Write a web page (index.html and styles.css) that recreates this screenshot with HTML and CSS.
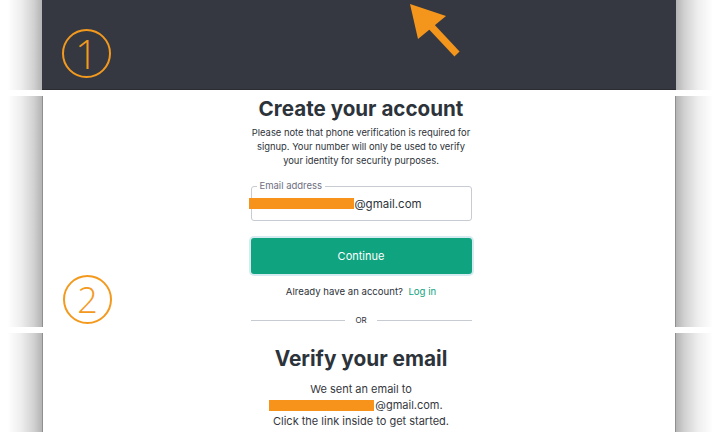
FILE: index.html
```html
<!DOCTYPE html>
<html lang="en">
<head>
<meta charset="utf-8">
<title>Create your account</title>
<link rel="stylesheet" href="styles.css">
</head>
<body>
<div class="page">
  <section class="shot shot-1">
    <div class="shade shade-l"></div>
    <div class="panel panel-dark">
      <div class="step step-1">1</div>
      <svg class="arrow" viewBox="400 0 70 65" width="70" height="65" aria-hidden="true">
        <polygon points="410,4 446,16 418,39" fill="#f5961c"/>
        <line x1="428" y1="23" x2="457" y2="54" stroke="#f5961c" stroke-width="7"/>
      </svg>
    </div>
    <div class="shade shade-r"></div>
  </section>

  <section class="shot shot-2">
    <div class="shade shade-l"></div>
    <div class="panel panel-light">
      <div class="step step-2">2</div>
      <div class="form">
        <h1 class="title">Create your account</h1>
        <p class="note">Please note that phone verification is required for signup. Your number will only be used to verify your identity for security purposes.</p>
        <div class="field">
          <span class="field-label">Email address</span>
          <span class="redact redact-in"></span><span class="field-value">@gmail.com</span>
        </div>
        <div class="btn">Continue</div>
        <div class="login">Already have an account?&nbsp; <span class="link">Log in</span></div>
        <div class="or"><span class="or-line"></span><span class="or-text">OR</span><span class="or-line"></span></div>
      </div>
    </div>
    <div class="shade shade-r"></div>
  </section>

  <section class="shot shot-3">
    <div class="shade shade-l"></div>
    <div class="panel panel-light">
      <div class="form">
        <h2 class="title title-2">Verify your email</h2>
        <div class="sent">
          <div>We sent an email to</div>
          <div class="sent-mail"><span class="redact redact-out"></span><span>@gmail.com.</span></div>
          <div>Click the link inside to get started.</div>
        </div>
      </div>
    </div>
    <div class="shade shade-r"></div>
  </section>
</div>
</body>
</html>
```

FILE: styles.css
```css
* { box-sizing: border-box; }

html, body {
  margin: 0;
  padding: 0;
  background: #ffffff;
  width: 720px;
  height: 432px;
  overflow: hidden;
  font-family: Inter, "Noto Sans", sans-serif;
  color: #2d333a;
}

.page {
  display: flex;
  flex-direction: column;
  gap: 6px;
}

.shot {
  display: grid;
  grid-template-columns: 42px 634px 44px;
}

.shot-1 { height: 90px; }
.shot-2 { height: 231px; }
.shot-3 { height: 110px; }

.shade-l {
  background: linear-gradient(to right, #ffffff 0%, #ffffff 18%, #eeeeee 50%, #d2d2d2 80%, #b4b4b4 100%);
}

.shade-r {
  background: linear-gradient(to left, #ffffff 0%, #ffffff 16%, #eeeeee 50%, #d2d2d2 80%, #b4b4b4 100%);
}

.panel {
  position: relative;
}

.panel-dark {
  background: #363841;
  border-bottom: 1px solid #2b2c33;
}

.panel-light {
  background: #ffffff;
  border-left: 1px solid #8f8f8f;
  border-right: 1px solid #8f8f8f;
  padding-left: 4px;
}

.step {
  position: absolute;
  width: 49px;
  height: 49px;
  border: 2.5px solid #f39a1e;
  border-radius: 50%;
  display: flex;
  align-items: center;
  justify-content: center;
  color: #f39a1e;
  font-family: "Open Sans", "Liberation Sans", sans-serif;
  font-weight: 300;
  line-height: 1;
}

.step-1 {
  left: 20px;
  top: 29px;
  font-size: 40px;
}

.step-2 {
  left: 20px;
  top: 179px;
  font-size: 36px;
}

.arrow {
  position: absolute;
  left: 358px;
  top: 0;
}

.form {
  width: 221px;
  margin: 0 auto;
  display: flex;
  flex-direction: column;
  align-items: stretch;
  text-align: center;
}

.title {
  margin: 0 -10px;
  padding-top: 1px;
  font-size: 20.6px;
  line-height: 24px;
  font-weight: 700;
  color: #2d333a;
  white-space: nowrap;
}

.note {
  margin: 5px 0 0;
  font-size: 9.4px;
  line-height: 14px;
  color: #2d333a;
}

.field {
  position: relative;
  margin-top: 18px;
  height: 35px;
  border: 1px solid #c7ccd3;
  border-radius: 3px;
  display: flex;
  align-items: center;
  text-align: left;
}

.field-label {
  position: absolute;
  left: 5px;
  top: -7px;
  padding: 0 3px;
  background: #ffffff;
  font-size: 9.5px;
  line-height: 12px;
  color: #6e6e80;
}

.redact {
  display: inline-block;
  height: 11px;
  width: 105px;
  background: #f7931a;
}

.redact-in {
  margin-left: -3px;
}

.field-value {
  font-size: 11.5px;
  color: #2d333a;
  padding-left: 1px;
}

.btn {
  margin-top: 17px;
  height: 36px;
  background: #10a37f;
  border-radius: 3px;
  box-shadow: 0 0 0 2px #d6eaf1;
  color: #ffffff;
  font-size: 11px;
  display: flex;
  align-items: center;
  justify-content: center;
}

.login {
  margin-top: 11px;
  font-size: 9.6px;
  line-height: 14px;
  color: #2d333a;
}

.link {
  color: #10a37f;
}

.or {
  margin-top: 15px;
  height: 12px;
  display: flex;
  align-items: center;
  gap: 10px;
}

.or-line {
  flex: 1;
  height: 1px;
  background: #c7ccd3;
}

.or-text {
  font-size: 8px;
  color: #2d333a;
}

.shot-3 .form {
  padding-top: 13px;
}

.title-2 {
  font-size: 20.8px;
  line-height: 25px;
  padding-top: 0;
}

.sent {
  margin: 10px -20px 0;
  font-size: 11px;
  line-height: 16px;
  color: #353740;
}

.sent-mail {
  display: flex;
  align-items: center;
  justify-content: center;
  padding-right: 10px;
}

.redact-out {
  margin-right: 1px;
}
```
